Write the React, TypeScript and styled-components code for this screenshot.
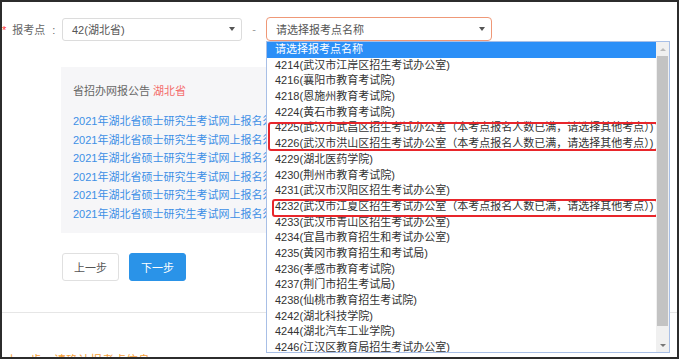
import { FC } from 'react'
import styled, { createGlobalStyle } from 'styled-components'

const GlobalStyle = createGlobalStyle`
  body {
    margin: 0;
    background: #fff;
    font-family: 'Liberation Sans', 'Noto Sans CJK SC', sans-serif;
  }
`

const Frame = styled.div`
  position: relative;
  box-sizing: border-box;
  width: 679px;
  height: 359px;
  border: 2px solid #2c2c2c;
  overflow: hidden;
  background: #fff;
`
const FormRow = styled.div`
  display: flex;
  align-items: center;
  margin-top: 15px;
  height: 24px;
`
const Label = styled.div`
  width: 60px;
  box-sizing: border-box;
  font-size: 11px;
  color: #666;
  white-space: nowrap;
  span {
    color: #f33;
    margin-right: 6px;
  }
  i {
    font-style: normal;
    margin-left: 7px;
  }
`
const Select = styled.div<{ $active?: boolean; $width: number }>`
  display: flex;
  align-items: center;
  justify-content: space-between;
  box-sizing: border-box;
  width: ${(p) => p.$width}px;
  height: ${(p) => (p.$active ? 24 : 23)}px;
  padding: 0 6px 0 9px;
  border: 1px solid ${(p) => (p.$active ? '#ef9877' : '#dcdcdc')};
  border-radius: ${(p) => (p.$active ? 4 : 3)}px;
  font-size: 11px;
  color: #555;
  &::after {
    content: '';
    border-left: 3px solid transparent;
    border-right: 3px solid transparent;
    border-top: 4px solid #555;
  }
`
const Dash = styled.div`
  width: 24px;
  text-align: center;
  font-size: 11px;
  color: #999;
`
const Notice = styled.div`
  box-sizing: border-box;
  margin: 26px 0 0 59px;
  width: 420px;
  height: 166px;
  padding: 15px 0 0 12px;
  background: #f6f6f8;
`
const NoticeTitle = styled.div`
  font-size: 11px;
  line-height: 18px;
  color: #666;
  margin-bottom: 12px;
  em {
    font-style: normal;
    color: #f46a6a;
  }
`
const NoticeLink = styled.a`
  display: block;
  font-size: 11px;
  line-height: 18.6px;
  color: #3d8fe6;
  text-decoration: none;
  white-space: nowrap;
`
const ButtonRow = styled.div`
  display: flex;
  gap: 10px;
  margin: 20px 0 0 60px;
`
const Button = styled.button<{ $primary?: boolean }>`
  width: 57px;
  height: 28px;
  border-radius: 3px;
  border: 1px solid ${(p) => (p.$primary ? '#2a93e8' : '#e0e0e0')};
  background: ${(p) => (p.$primary ? '#2a93e8' : '#fff')};
  color: ${(p) => (p.$primary ? '#fff' : '#555')};
  font-family: inherit;
  font-size: 11px;
  padding: 0;
`
const Divider = styled.div`
  margin-top: 31px;
  height: 1px;
  background: #e6e6e6;
`
const FootNote = styled.div`
  margin: 41px 0 0 4px;
  font-size: 12px;
  line-height: 14px;
  color: #f7a23a;
  white-space: nowrap;
`
const Dropdown = styled.div`
  position: absolute;
  left: 264px;
  top: 39px;
  width: 404px;
  height: 312px;
  box-sizing: border-box;
  border: 1px solid #a8bfe6;
  background: #fff;
  display: flex;
`
const List = styled.div`
  position: relative;
  flex: 1;
  overflow: hidden;
`
const Option = styled.div<{ $selected?: boolean }>`
  height: 15.7px;
  line-height: 15.7px;
  padding-left: 8px;
  font-size: 11px;
  white-space: nowrap;
  color: ${(p) => (p.$selected ? '#fff' : '#333')};
  background: ${(p) => (p.$selected ? '#2b8ff7' : 'transparent')};
`
const Mark = styled.div<{ $left: number; $top: number; $width: number; $height: number }>`
  position: absolute;
  left: ${(p) => p.$left}px;
  top: ${(p) => p.$top}px;
  width: ${(p) => p.$width}px;
  height: ${(p) => p.$height}px;
  box-sizing: border-box;
  border: 2px solid #e8262b;
  border-radius: 3px;
`
const Scrollbar = styled.div`
  width: 13px;
  background: #f0f0f0;
  display: flex;
  flex-direction: column;
  align-items: center;
`
const Arrow = styled.div<{ $down?: boolean }>`
  height: 14px;
  display: flex;
  align-items: center;
  &::after {
    content: '';
    border-left: 3px solid transparent;
    border-right: 3px solid transparent;
    ${(p) => (p.$down ? 'border-top: 3px solid #777;' : 'border-bottom: 3px solid #bbb;')}
  }
`
const Thumb = styled.div`
  width: 11px;
  height: 270px;
  background: #c3c3c3;
`
const Track = styled.div`
  flex: 1;
`

const options = [
  '请选择报考点名称',
  '4214(武汉市江岸区招生考试办公室)',
  '4216(襄阳市教育考试院)',
  '4218(恩施州教育考试院)',
  '4224(黄石市教育考试院)',
  '4225(武汉市武昌区招生考试办公室（本考点报名人数已满，请选择其他考点）)',
  '4226(武汉市洪山区招生考试办公室（本考点报名人数已满，请选择其他考点）)',
  '4229(湖北医药学院)',
  '4230(荆州市教育考试院)',
  '4231(武汉市汉阳区招生考试办公室)',
  '4232(武汉市江夏区招生考试办公室（本考点报名人数已满，请选择其他考点）)',
  '4233(武汉市青山区招生考试办公室)',
  '4234(宜昌市教育招生和考试办公室)',
  '4235(黄冈市教育招生和考试局)',
  '4236(孝感市教育考试院)',
  '4237(荆门市招生考试局)',
  '4238(仙桃市教育招生考试院)',
  '4242(湖北科技学院)',
  '4244(湖北汽车工业学院)',
  '4246(江汉区教育局招生考试办公室)',
]

const notice = '2021年湖北省硕士研究生考试网上报名须知及相关注意事项'

const App: FC = () => {
  return (
    <Frame>
      <GlobalStyle />
      <FormRow>
        <Label>
          <span>*</span>报考点<i>:</i>
        </Label>
        <Select $width={180}>42(湖北省)</Select>
        <Dash>-</Dash>
        <Select $active $width={226}>
          请选择报考点名称
        </Select>
      </FormRow>
      <Notice>
        <NoticeTitle>
          省招办网报公告 <em>湖北省</em>
        </NoticeTitle>
        {[0, 1, 2, 3, 4, 5].map((i) => (
          <NoticeLink key={i} href={'#'}>
            {notice}
          </NoticeLink>
        ))}
      </Notice>
      <ButtonRow>
        <Button>上一步</Button>
        <Button $primary>下一步</Button>
      </ButtonRow>
      <Divider />
      <FootNote>上一步，请确认报考点信息</FootNote>
      <Dropdown>
        <List>
          {options.map((o, i) => (
            <Option key={o} $selected={i === 0}>
              {o}
            </Option>
          ))}
          <Mark $left={1} $top={80} $width={390} $height={29} />
          <Mark $left={5} $top={157} $width={386} $height={18} />
        </List>
        <Scrollbar>
          <Arrow />
          <Thumb />
          <Track />
          <Arrow $down />
        </Scrollbar>
      </Dropdown>
    </Frame>
  )
}

export default App
